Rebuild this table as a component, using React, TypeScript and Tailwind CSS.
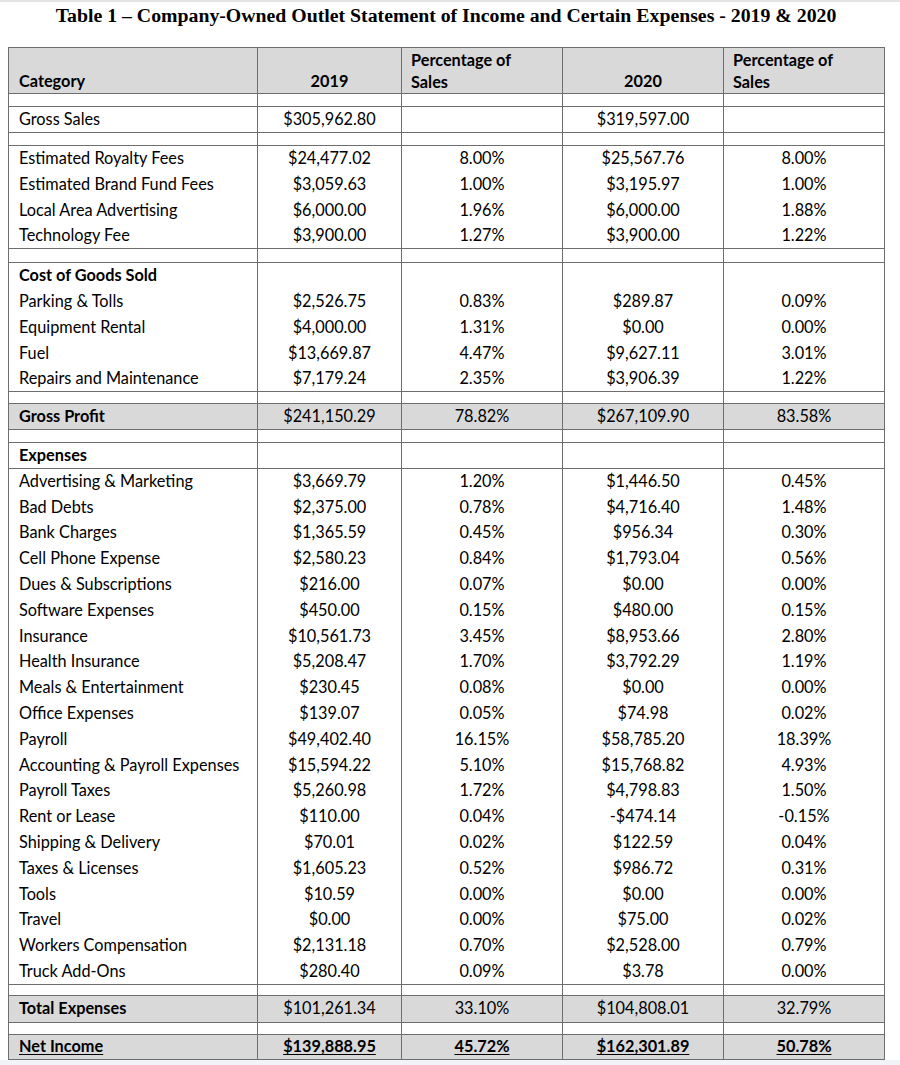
import React from "react";

type Row =
  | { kind: "spacer"; h?: number }
  | {
      kind: "data";
      label: string;
      v19?: string;
      p19?: string;
      v20?: string;
      p20?: string;
      bold?: boolean;
      gray?: boolean;
      underline?: boolean;
      lineBelow?: boolean;
      h?: number;
    };

const rows: Row[] = [
  { kind: "spacer", h: 13 },
  { kind: "data", label: "Gross Sales", v19: "$305,962.80", v20: "$319,597.00" },
  { kind: "spacer", h: 13 },
  { kind: "data", label: "Estimated Royalty Fees", v19: "$24,477.02", p19: "8.00%", v20: "$25,567.76", p20: "8.00%" },
  { kind: "data", label: "Estimated Brand Fund Fees", v19: "$3,059.63", p19: "1.00%", v20: "$3,195.97", p20: "1.00%" },
  { kind: "data", label: "Local Area Advertising", v19: "$6,000.00", p19: "1.96%", v20: "$6,000.00", p20: "1.88%" },
  { kind: "data", label: "Technology Fee", v19: "$3,900.00", p19: "1.27%", v20: "$3,900.00", p20: "1.22%" },
  { kind: "spacer", h: 14 },
  { kind: "data", label: "Cost of Goods Sold", bold: true },
  { kind: "data", label: "Parking & Tolls", v19: "$2,526.75", p19: "0.83%", v20: "$289.87", p20: "0.09%" },
  { kind: "data", label: "Equipment Rental", v19: "$4,000.00", p19: "1.31%", v20: "$0.00", p20: "0.00%" },
  { kind: "data", label: "Fuel", v19: "$13,669.87", p19: "4.47%", v20: "$9,627.11", p20: "3.01%" },
  { kind: "data", label: "Repairs and Maintenance", v19: "$7,179.24", p19: "2.35%", v20: "$3,906.39", p20: "1.22%" },
  { kind: "spacer", h: 12 },
  { kind: "data", label: "Gross Profit", v19: "$241,150.29", p19: "78.82%", v20: "$267,109.90", p20: "83.58%", bold: true, gray: true },
  { kind: "spacer", h: 13 },
  { kind: "data", label: "Expenses", bold: true, lineBelow: true },
  { kind: "data", label: "Advertising & Marketing", v19: "$3,669.79", p19: "1.20%", v20: "$1,446.50", p20: "0.45%" },
  { kind: "data", label: "Bad Debts", v19: "$2,375.00", p19: "0.78%", v20: "$4,716.40", p20: "1.48%" },
  { kind: "data", label: "Bank Charges", v19: "$1,365.59", p19: "0.45%", v20: "$956.34", p20: "0.30%" },
  { kind: "data", label: "Cell Phone Expense", v19: "$2,580.23", p19: "0.84%", v20: "$1,793.04", p20: "0.56%" },
  { kind: "data", label: "Dues & Subscriptions", v19: "$216.00", p19: "0.07%", v20: "$0.00", p20: "0.00%" },
  { kind: "data", label: "Software Expenses", v19: "$450.00", p19: "0.15%", v20: "$480.00", p20: "0.15%" },
  { kind: "data", label: "Insurance", v19: "$10,561.73", p19: "3.45%", v20: "$8,953.66", p20: "2.80%" },
  { kind: "data", label: "Health Insurance", v19: "$5,208.47", p19: "1.70%", v20: "$3,792.29", p20: "1.19%" },
  { kind: "data", label: "Meals & Entertainment", v19: "$230.45", p19: "0.08%", v20: "$0.00", p20: "0.00%" },
  { kind: "data", label: "Office Expenses", v19: "$139.07", p19: "0.05%", v20: "$74.98", p20: "0.02%" },
  { kind: "data", label: "Payroll", v19: "$49,402.40", p19: "16.15%", v20: "$58,785.20", p20: "18.39%" },
  { kind: "data", label: "Accounting & Payroll Expenses", v19: "$15,594.22", p19: "5.10%", v20: "$15,768.82", p20: "4.93%" },
  { kind: "data", label: "Payroll Taxes", v19: "$5,260.98", p19: "1.72%", v20: "$4,798.83", p20: "1.50%" },
  { kind: "data", label: "Rent or Lease", v19: "$110.00", p19: "0.04%", v20: "-$474.14", p20: "-0.15%" },
  { kind: "data", label: "Shipping & Delivery", v19: "$70.01", p19: "0.02%", v20: "$122.59", p20: "0.04%" },
  { kind: "data", label: "Taxes & Licenses", v19: "$1,605.23", p19: "0.52%", v20: "$986.72", p20: "0.31%" },
  { kind: "data", label: "Tools", v19: "$10.59", p19: "0.00%", v20: "$0.00", p20: "0.00%" },
  { kind: "data", label: "Travel", v19: "$0.00", p19: "0.00%", v20: "$75.00", p20: "0.02%" },
  { kind: "data", label: "Workers Compensation", v19: "$2,131.18", p19: "0.70%", v20: "$2,528.00", p20: "0.79%" },
  { kind: "data", label: "Truck Add-Ons", v19: "$280.40", p19: "0.09%", v20: "$3.78", p20: "0.00%" },
  { kind: "spacer", h: 11 },
  { kind: "data", label: "Total Expenses", v19: "$101,261.34", p19: "33.10%", v20: "$104,808.01", p20: "32.79%", bold: true, gray: true, h: 27 },
  { kind: "spacer", h: 12 },
  { kind: "data", label: "Net Income", v19: "$139,888.95", p19: "45.72%", v20: "$162,301.89", p20: "50.78%", bold: true, gray: true, underline: true, h: 25 },
];

const cell = "border-x border-[#6e6e6e] p-0";

const App: React.FC = () => {
  return (
    <div className="w-[900px] h-[1065px] flex flex-col bg-white border-t-2 border-[#e4e4e4] font-['Lato',sans-serif] text-black">
      {/* Title */}
      <div className="h-[28px] flex items-center justify-center pr-[8px] font-['Liberation_Serif',serif] font-bold text-[19.8px]">
        Table 1 – Company-Owned Outlet Statement of Income and Certain Expenses - 2019 &amp; 2020
      </div>

      <div className="flex-1 pt-[17px] pl-2">
        <table className="table-fixed border-collapse text-[16.3px] leading-none">
          <colgroup>
            <col className="w-[249px]" />
            <col className="w-[144px]" />
            <col className="w-[161px]" />
            <col className="w-[161px]" />
            <col className="w-[161px]" />
          </colgroup>
          <thead>
            <tr className="h-[45px] bg-[#d9d9d9] font-bold border-y border-[#6e6e6e]">
              <th className={`${cell} text-left align-bottom pl-[10px] pb-[4px]`}>Category</th>
              <th className={`${cell} text-center align-bottom pb-[4px]`}>2019</th>
              <th className={`${cell} text-left align-top pl-[9px] pt-[1px] leading-[22px]`}>
                Percentage of
                <br />
                Sales
              </th>
              <th className={`${cell} text-center align-bottom pb-[4px]`}>2020</th>
              <th className={`${cell} text-left align-top pl-[9px] pt-[1px] leading-[22px]`}>
                Percentage of
                <br />
                Sales
              </th>
            </tr>
          </thead>
          <tbody>
            {rows.map((r, i) => {
              if (r.kind === "spacer") {
                return (
                  <tr key={i} className="border-y border-[#6e6e6e]" style={{ height: r.h }}>
                    <td className={cell} />
                    <td className={cell} />
                    <td className={cell} />
                    <td className={cell} />
                    <td className={cell} />
                  </tr>
                );
              }
              const num = r.underline ? "font-bold underline underline-offset-2" : "";
              return (
                <tr
                  key={i}
                  className={`${r.gray ? "bg-[#d9d9d9]" : ""} ${r.gray || r.lineBelow ? "border-y border-[#6e6e6e]" : ""}`}
                  style={{ height: r.h ?? 25.8 }}
                >
                  <td className={`${cell} pl-[10px] text-left ${r.bold ? "font-bold" : ""} ${r.underline ? "underline underline-offset-2" : ""}`}>
                    {r.label}
                  </td>
                  <td className={`${cell} text-center ${num}`}>{r.v19}</td>
                  <td className={`${cell} text-center ${num}`}>{r.p19}</td>
                  <td className={`${cell} text-center ${num}`}>{r.v20}</td>
                  <td className={`${cell} text-center ${num}`}>{r.p20}</td>
                </tr>
              );
            })}
          </tbody>
        </table>
      </div>
      <div className="h-[6px] bg-[#f1f3f8]" />
    </div>
  );
};

export default App;
